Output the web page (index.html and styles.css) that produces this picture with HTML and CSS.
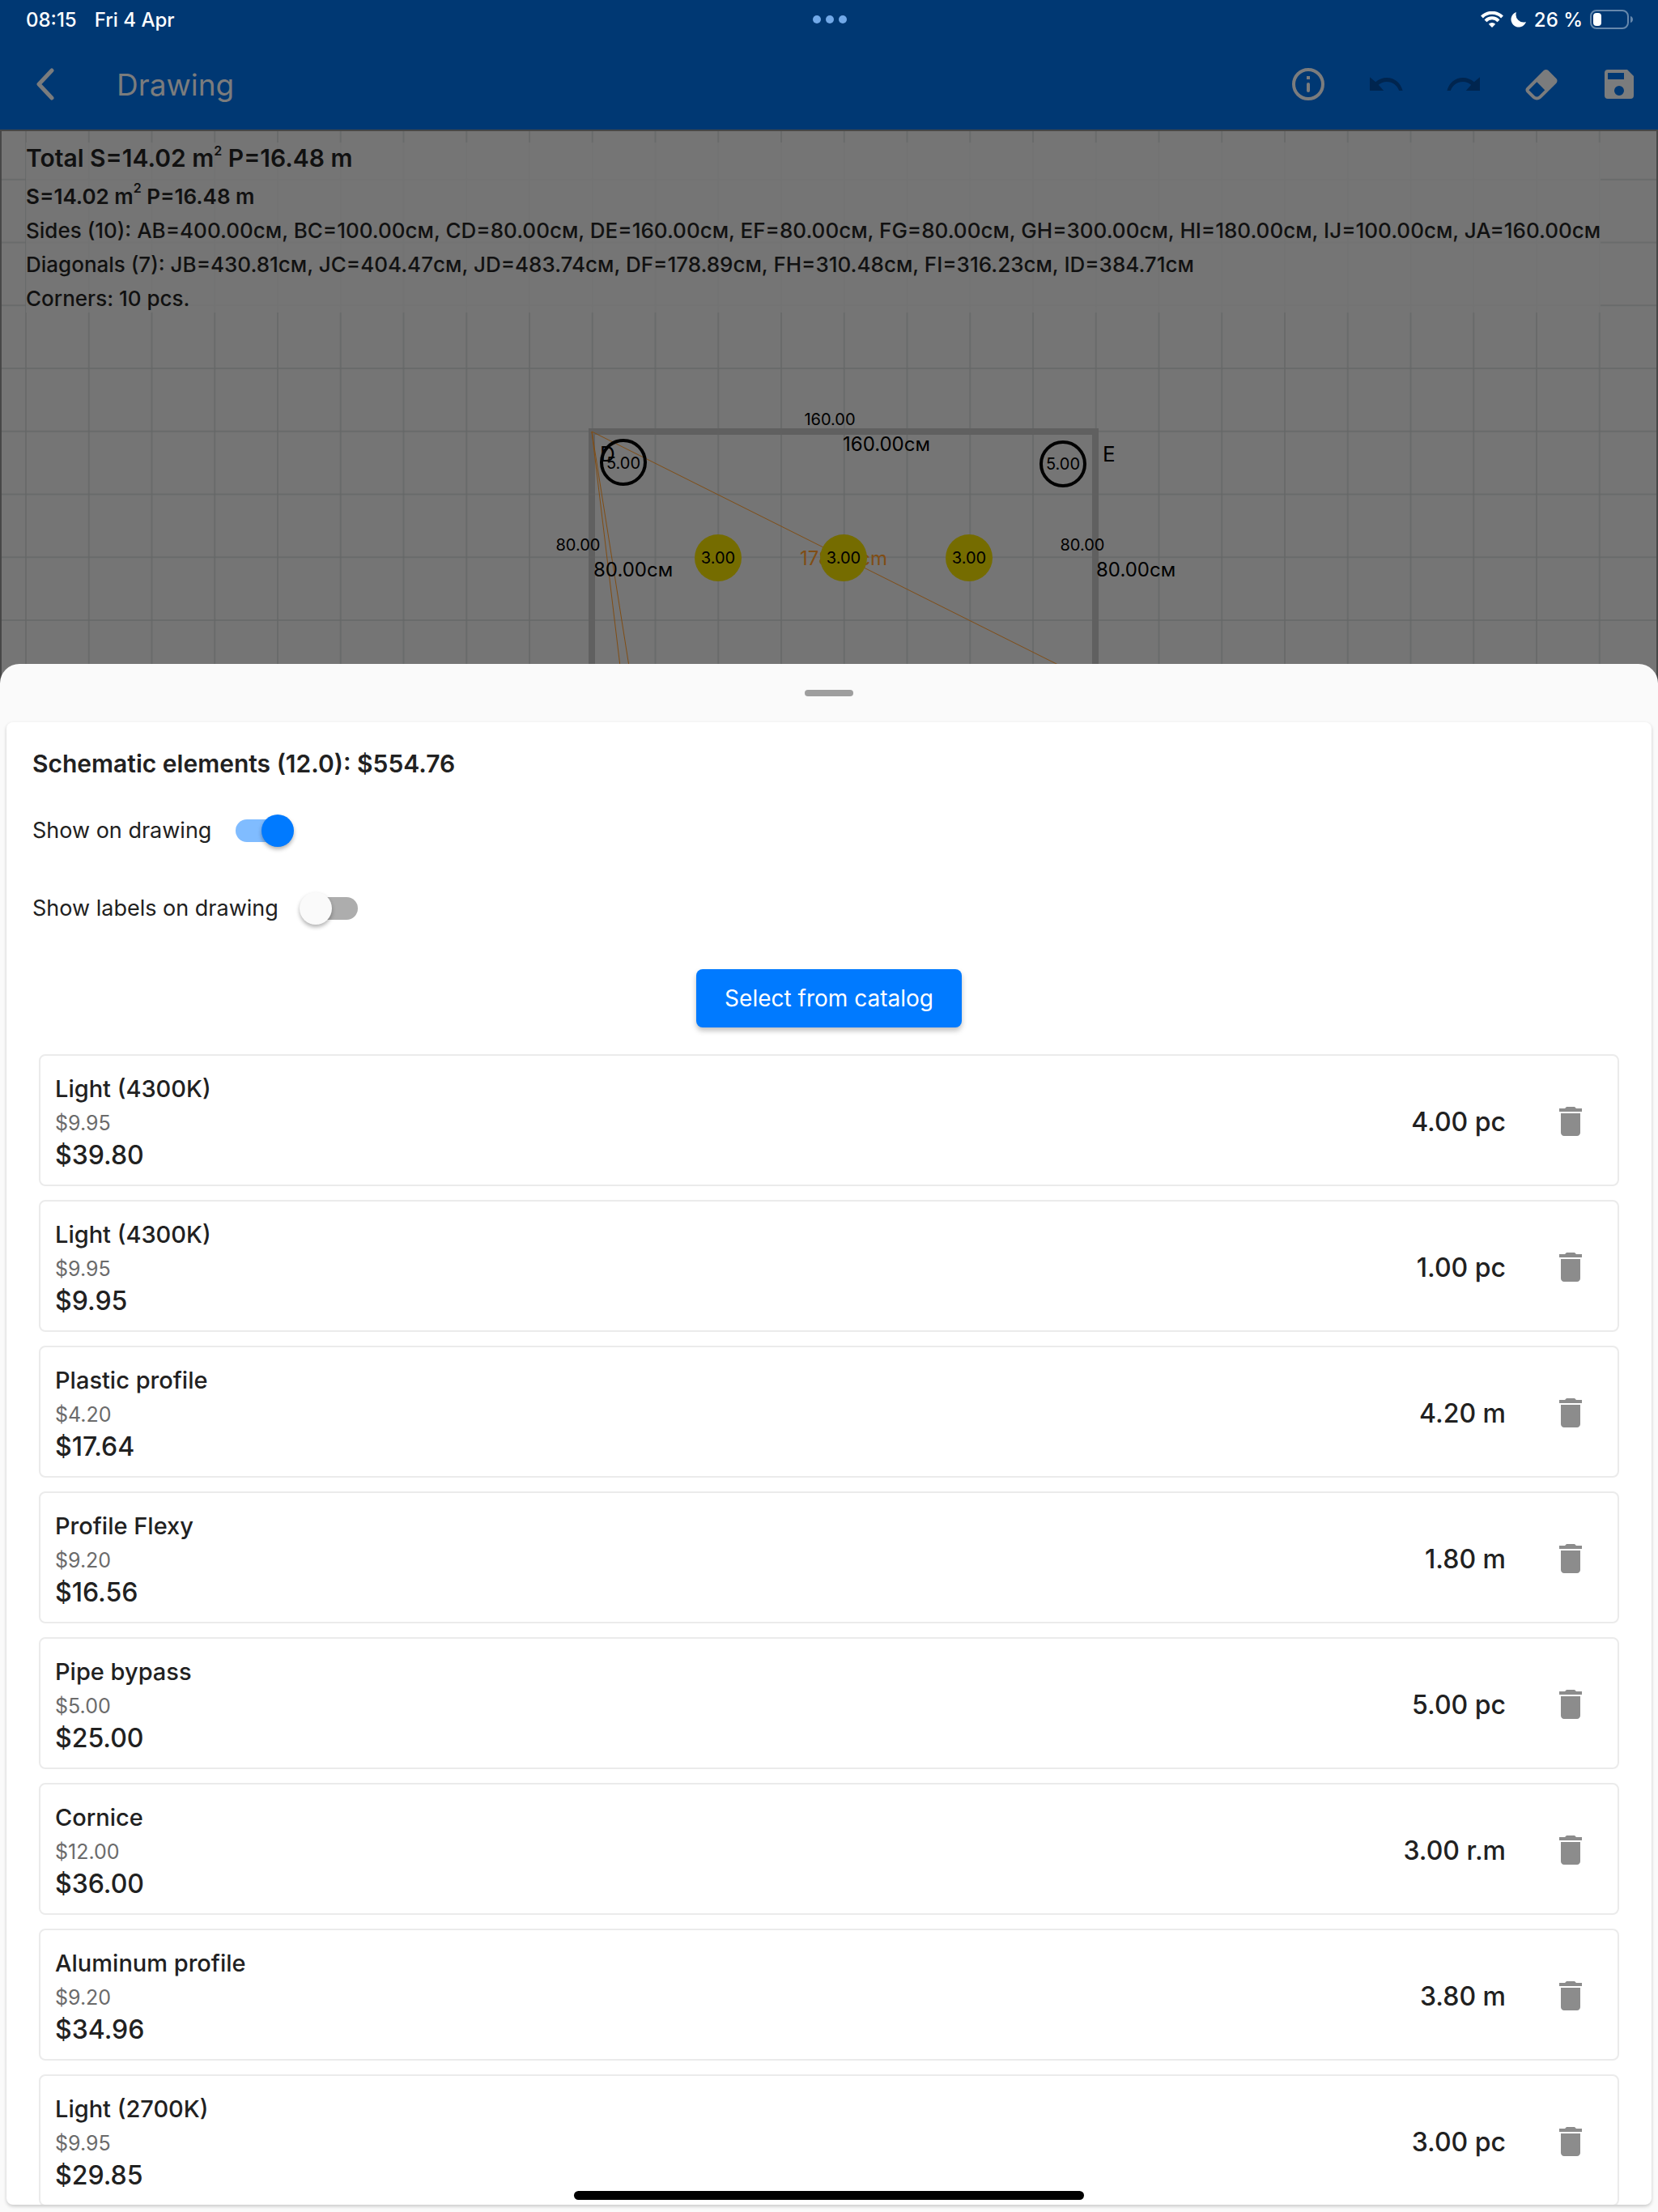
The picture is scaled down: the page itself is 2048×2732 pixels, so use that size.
FILE: index.html
```html
<!DOCTYPE html>
<html lang="en">
<head>
<meta charset="utf-8">
<meta name="viewport" content="width=device-width, initial-scale=1">
<title>Drawing</title>
<link rel="stylesheet" href="styles.css">
</head>
<body>
<svg class="sprite" aria-hidden="true">
  <symbol id="trash" viewBox="0 0 24 24"><path d="M6 19c0 1.1.9 2 2 2h8c1.1 0 2-.9 2-2V7H6v12zM19 4h-3.5l-1-1h-5l-1 1H5v2h14V4z"/></symbol>
</svg>
<div class="screen">
  <header class="top">
    <div class="status">
      <div class="status-side"><span>08:15</span><span>Fri 4 Apr</span></div>
      <div class="dots"><i></i><i></i><i></i></div>
      <div class="status-side status-right">
        <svg class="wifi" viewBox="0 0 28 20"><path d="M1.500 7a17.500 17.500 0 0 1 25 0M6 11.800a11 11 0 0 1 16 0" fill="none" stroke="#fff" stroke-width="4"/><path d="M14 20l-4.200-4.300a6 6 0 0 1 8.400 0z" fill="#fff"/></svg>
        <svg class="moon" viewBox="0 0 20 20"><path d="M7 1a9.500 9.500 0 1 0 12 12A9.500 9.500 0 0 1 7 1z" fill="#fff"/></svg>
        <span>26 %</span>
        <svg class="battery" viewBox="0 0 54 24"><rect x="1" y="1" width="46" height="22" rx="7" fill="none" stroke="#6688ac" stroke-width="2"/><rect x="4" y="4" width="10" height="16" rx="4" fill="#fff"/><path d="M50 8c4 1 4 7 0 8z" fill="#6688ac"/></svg>
      </div>
    </div>
    <nav class="appbar">
      <button class="back" aria-label="Back"><svg viewBox="0 0 24 40"><path d="M20 3L4 20l16 17" fill="none" stroke="currentColor" stroke-width="5" stroke-linecap="round" stroke-linejoin="round"/></svg></button>
      <h1>Drawing</h1>
      <div class="actions">
        <button aria-label="Info"><svg viewBox="0 0 24 24"><circle cx="12" cy="12" r="9" fill="none" stroke="currentColor" stroke-width="2"/><path d="M11 7h2v2h-2z"/><rect x="11" y="11" width="2" height="6" rx="1"/></svg></button>
        <button aria-label="Undo" disabled><svg viewBox="0 0 24 24"><path d="M12.500 8c-2.650 0-5.050.99-6.900 2.600L2 7.600V16h8.600l-3.220-3.620c1.390-1.160 3.160-1.880 5.120-1.880 3.540 0 6.550 2.310 7.600 5.500h2.200C21 11 17.150 8 12.500 8z"/></svg></button>
        <button aria-label="Redo" disabled><svg viewBox="0 0 24 24"><path d="M11.500 8c2.650 0 5.050.99 6.900 2.600l3.600-3V16h-8.600l3.220-3.620c-1.390-1.160-3.160-1.880-5.120-1.880-3.540 0-6.550 2.310-7.600 5.500H1.700C3 11 6.850 8 11.500 8z"/></svg></button>
        <button aria-label="Eraser"><svg viewBox="0 0 24 24"><path d="M16.240 3.560L21.190 8.500C21.970 9.290 21.970 10.550 21.190 11.340L12 20.530C10.440 22.090 7.910 22.090 6.340 20.530L2.810 17C2.030 16.210 2.030 14.950 2.810 14.160L13.410 3.560C14.200 2.780 15.460 2.780 16.240 3.560M4.220 15.580L7.760 19.110C8.540 19.900 9.800 19.900 10.590 19.110L14.120 15.580L9.170 10.630L4.220 15.580Z" fill-rule="evenodd"/></svg></button>
        <button aria-label="Save"><svg viewBox="0 0 24 24"><path d="M17 3H5a2 2 0 0 0-2 2v14a2 2 0 0 0 2 2h14a2 2 0 0 0 2-2V7zM12 19a3 3 0 1 1 0-6 3 3 0 0 1 0 6zM15 9H5V5h10z" fill-rule="evenodd"/></svg></button>
      </div>
    </nav>
  </header>

  <main class="canvas">
    <svg class="plan" role="img" aria-label="Room plan">
      <defs><pattern id="grid" x="29" y="-19" width="77.750" height="77.750" patternUnits="userSpaceOnUse"><path d="M0 1h77.750M1 0v77.750" stroke="#656767" stroke-width="1.500" fill="none"/></pattern></defs>
      <rect width="100%" height="100%" fill="url(#grid)"/>
      <path class="wall" d="M729 900V371h622v529"/>
      <path class="diagonal" d="M729 371l622 311M729 371l35 290M729 371l46 290"/>
      <text class="diagonal-label" x="1040" y="536">178.89cm</text>
      <g class="outline"><circle cx="768" cy="409" r="27"/><circle cx="1311" cy="411" r="27"/></g>
      <g class="lamp"><circle cx="885" cy="527" r="29"/><circle cx="1040" cy="527" r="29"/><circle cx="1195" cy="527" r="29"/></g>
      <g class="small"><text x="768" y="417">5.00</text><text x="1311" y="418">5.00</text><text x="885" y="534">3.00</text><text x="1040" y="534">3.00</text><text x="1195" y="534">3.00</text><text x="1023" y="363">160.00</text><text x="712" y="518">80.00</text><text x="1335" y="518">80.00</text></g>
      <g class="length"><text x="1039" y="395">160.00см</text><text x="731" y="550">80.00см</text><text x="1352" y="550">80.00см</text></g>
      <g class="corner"><text x="739" y="408">D</text><text x="1360" y="408">E</text></g>
    </svg>
    <section class="info">
      <p class="total">Total S=14.02 m<sup>2</sup> P=16.48 m</p>
      <p class="room">S=14.02 m<sup>2</sup> P=16.48 m</p>
      <p>Sides (10): AB=400.00см, BC=100.00см, CD=80.00см, DE=160.00см, EF=80.00см, FG=80.00см, GH=300.00см, HI=180.00см, IJ=100.00см, JA=160.00см</p>
      <p>Diagonals (7): JB=430.81см, JC=404.47см, JD=483.74см, DF=178.89см, FH=310.48см, FI=316.23см, ID=384.71см</p>
      <p>Corners: 10 pcs.</p>
    </section>
  </main>

  <section class="sheet">
    <div class="grip"></div>
    <div class="card">
      <h2>Schematic elements (12.0): $554.76</h2>
      <label class="option">Show on drawing<input type="checkbox" checked></label>
      <label class="option">Show labels on drawing<input type="checkbox"></label>
      <button class="catalog">Select from catalog</button>
      <ul class="items">
        <li><div><h3>Light (4300K)</h3><p class="unit">$9.95</p><p class="sum">$39.80</p></div><span class="qty">4.00 pc</span><button aria-label="Delete"><svg><use href="#trash"/></svg></button></li>
        <li><div><h3>Light (4300K)</h3><p class="unit">$9.95</p><p class="sum">$9.95</p></div><span class="qty">1.00 pc</span><button aria-label="Delete"><svg><use href="#trash"/></svg></button></li>
        <li><div><h3>Plastic profile</h3><p class="unit">$4.20</p><p class="sum">$17.64</p></div><span class="qty">4.20 m</span><button aria-label="Delete"><svg><use href="#trash"/></svg></button></li>
        <li><div><h3>Profile Flexy</h3><p class="unit">$9.20</p><p class="sum">$16.56</p></div><span class="qty">1.80 m</span><button aria-label="Delete"><svg><use href="#trash"/></svg></button></li>
        <li><div><h3>Pipe bypass</h3><p class="unit">$5.00</p><p class="sum">$25.00</p></div><span class="qty">5.00 pc</span><button aria-label="Delete"><svg><use href="#trash"/></svg></button></li>
        <li><div><h3>Cornice</h3><p class="unit">$12.00</p><p class="sum">$36.00</p></div><span class="qty">3.00 r.m</span><button aria-label="Delete"><svg><use href="#trash"/></svg></button></li>
        <li><div><h3>Aluminum profile</h3><p class="unit">$9.20</p><p class="sum">$34.96</p></div><span class="qty">3.80 m</span><button aria-label="Delete"><svg><use href="#trash"/></svg></button></li>
        <li><div><h3>Light (2700K)</h3><p class="unit">$9.95</p><p class="sum">$29.85</p></div><span class="qty">3.00 pc</span><button aria-label="Delete"><svg><use href="#trash"/></svg></button></li>
      </ul>
    </div>
    <div class="home"></div>
  </section>
</div>
</body>
</html>
```
FILE: styles.css
```css
* { box-sizing: border-box; }
body, h1, h2, h3, p, ul { margin: 0; padding: 0; }
body { font-family: Inter, "Liberation Sans", sans-serif; color: #212121; }
button { border: 0; padding: 0; background: none; color: inherit; font: inherit; }
svg { display: block; fill: currentColor; }
.sprite { display: none; }

.screen { position: relative; display: flex; flex-direction: column; height: 100vh; overflow: hidden; background: #757575; }

/* status bar and app bar */
.top { background: #003873; color: #7b7c7d; }
.status { display: grid; grid-template-columns: 1fr auto 1fr; align-items: center; height: 48px; padding: 0 30px 0 32px; color: #fff; font-size: 24px; font-weight: 500; }
.status-side { display: flex; align-items: center; gap: 22px; }
.status-right { justify-content: flex-end; gap: 9px; }
.dots { display: flex; gap: 6px; }
.dots i { width: 10px; height: 10px; border-radius: 50%; background: #72a9e8; }
.wifi { width: 28px; height: 20px; }
.moon { width: 20px; height: 20px; }
.battery { width: 54px; height: 24px; }
.appbar { display: flex; align-items: center; height: 112px; }
.back { display: flex; align-items: center; width: 112px; height: 96px; padding-left: 44px; }
.back svg { width: 24px; height: 40px; }
.appbar h1 { margin-left: 32px; font-size: 37px; font-weight: 400; }
.actions { display: flex; margin-left: auto; }
.actions button { display: grid; place-items: center; width: 96px; height: 96px; }
.actions svg { width: 48px; height: 48px; }
.actions button:disabled { color: #00254f; }

/* drawing area under the sheet */
.canvas { position: relative; flex: 1; border: 2px solid #474747; border-bottom: 0; }
.plan { position: absolute; inset: 0; width: 100%; height: 100%; }
.wall { fill: none; stroke: #606060; stroke-width: 8; }
.diagonal { fill: none; stroke: #804d14; stroke-width: 1; }
.diagonal-label { fill: #804d14; font-size: 24px; text-anchor: middle; }
.outline circle { fill: none; stroke: #000; stroke-width: 4; }
.lamp circle { fill: #756c00; }
.small { fill: #000; font-size: 20px; text-anchor: middle; }
.length { fill: #000; font-size: 24px; }
.corner { fill: #000; font-size: 26px; }
.info { position: relative; width: fit-content; height: 210px; margin: 14px 30px 0; background: rgba(117, 117, 117, 0.8); color: #111; font-size: 26px; line-height: 42px; font-weight: 500; }
.info p { white-space: nowrap; }
.info .total { margin-bottom: 8px; font-size: 30px; line-height: 38px; font-weight: 600; }
.info .room { font-weight: 600; }
.info sup { font-size: 16px; line-height: 0; vertical-align: 14px; font-weight: 600; }

/* bottom sheet */
.sheet { position: absolute; inset: 30% 0 0; display: flex; flex-direction: column; padding: 0 8px 9px; border-radius: 24px 24px 0 0; background: #fafafa; }
.grip { flex: none; width: 60px; height: 8px; margin: 32px auto; border-radius: 4px; background: #9e9e9e; }
.card { display: flex; flex-direction: column; align-items: flex-start; flex: 1; min-height: 0; overflow: hidden; padding: 24px 40px 0 32px; border-radius: 8px; background: #fff; box-shadow: 0 2px 4px rgba(0, 0, 0, 0.2); }
.card h2 { margin-bottom: 8px; font-size: 30px; line-height: 54px; font-weight: 600; }
.option { display: flex; align-items: center; flex: none; gap: 26px; height: 96px; font-size: 27px; }
.option input { appearance: none; position: relative; width: 76px; height: 40px; margin: 0; }
.option input::before { content: ""; position: absolute; inset: 6px 4px; border-radius: 14px; background: #adadad; }
.option input::after { content: ""; position: absolute; left: 0; top: 0; width: 40px; height: 40px; border-radius: 50%; background: #fafafa; box-shadow: 0 3px 5px rgba(0, 0, 0, 0.3); }
.option input:checked::before { background: #80bcff; }
.option input:checked::after { left: auto; right: 0; background: #007aff; }
.catalog { flex: none; align-self: center; width: 328px; height: 72px; margin: 27px 0 33px 8px; border-radius: 8px; background: #007aff; color: #fff; font-size: 28px; box-shadow: 0 4px 6px rgba(0, 0, 0, 0.25); }
.items { display: flex; flex-direction: column; gap: 17px; align-self: stretch; padding-left: 8px; list-style: none; }
.items li { display: flex; align-items: center; flex: none; height: 163px; padding: 4px 34px 0 18px; border: 2px solid #ebebeb; border-radius: 8px; }
.items h3 { font-size: 29px; line-height: 44px; font-weight: 500; }
.unit { color: #6b6b6b; font-size: 25px; line-height: 40px; }
.sum { font-size: 32px; line-height: 40px; font-weight: 500; }
.qty { margin-left: auto; font-size: 32px; font-weight: 500; }
.items button { margin-left: 56px; color: #8c8c8c; }
.items svg { width: 48px; height: 48px; }

.home { position: absolute; left: 50%; bottom: 15px; width: 630px; height: 11px; margin-left: -315px; border-radius: 6px; background: #000; }
```
